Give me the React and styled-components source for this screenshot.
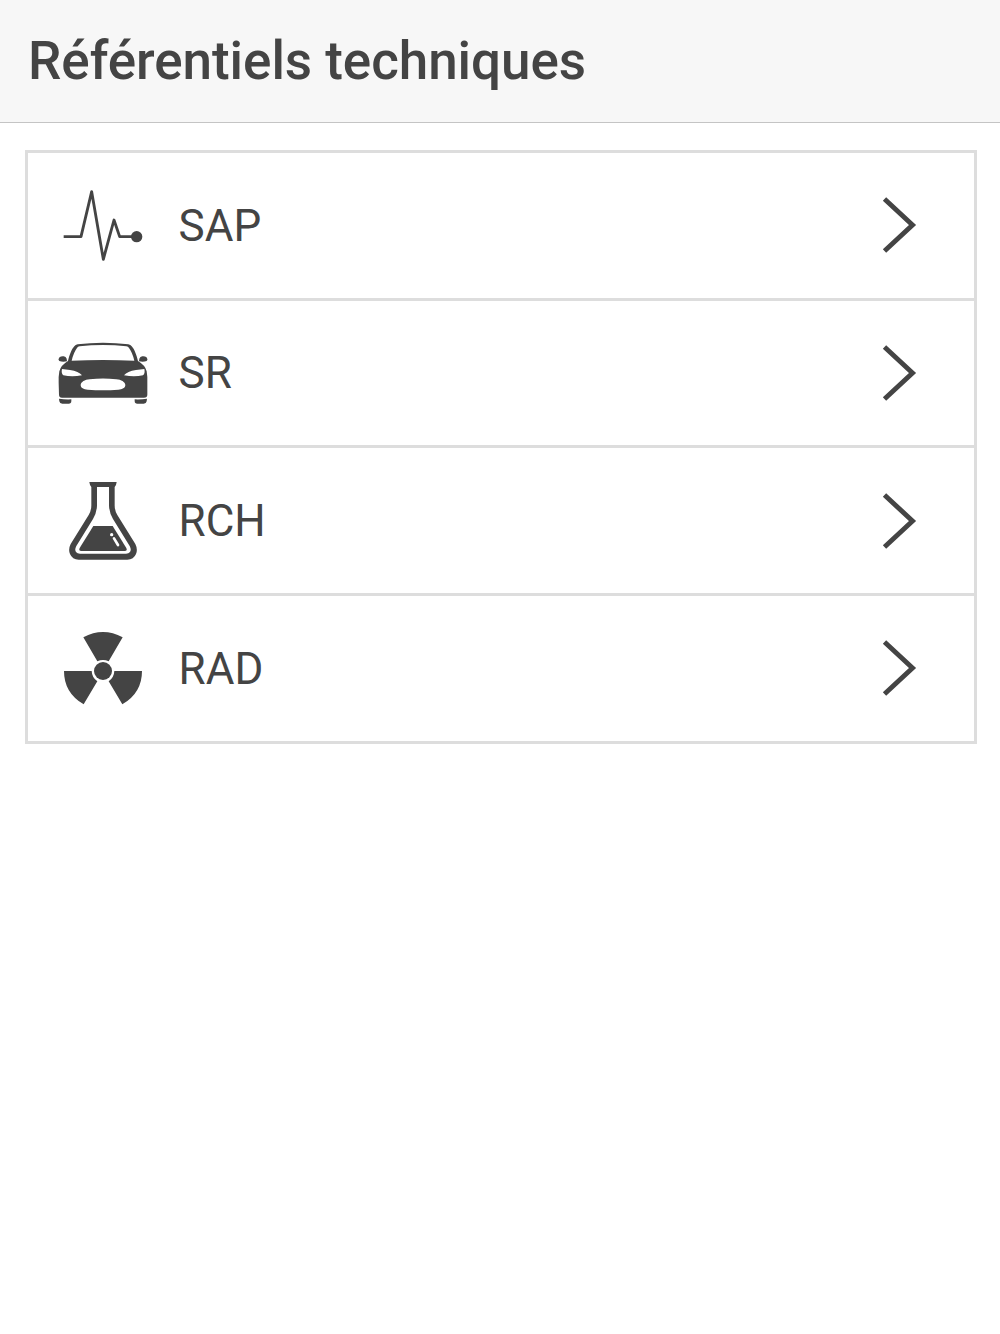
import React from 'react';
import styled, { createGlobalStyle } from 'styled-components';

const PulseIcon = () => (
  <Icon viewBox="15 -9 288 288">
    <path
      d="M41 170H93L125 35L160 238L192 120L209 170H255"
      fill="none"
      stroke="currentColor"
      strokeWidth="8.5"
      strokeLinejoin="round"
    />
    <circle cx="260" cy="170" r="17" />
  </Icon>
);

const CarIcon = () => (
  <Icon viewBox="15 -15 288 288">
    <path
      fillRule="evenodd"
      d="M54 93C58 76 65 57 73 49Q76 44 83 43Q120 38 159 38Q198 38 235 43Q242 44 245 49C253 57 260 76 264 93
        Q286 106 290 124Q293 140 292 160L292 194Q292 203 282 203H36Q27 203 27 194L26 160Q25 140 28 124Q32 106 54 93Z
        M65 92Q110 90 159 90Q208 90 253 92Q247 67 237 54Q235 50 229 49Q195 45 159 45Q123 45 89 49Q83 50 81 54Q71 67 65 92Z
        M36 117Q33 130 40 136Q66 142 96 136Q86 124 60 120Z
        M283 117Q286 130 279 136Q253 142 222 136Q232 124 258 120Z
        M119 148Q159 143 199 148C214 149 225 156 226 165C226 174 217 178 205 179Q159 182 113 179C101 178 92 174 92 165C93 156 104 149 119 148Z"
    />
    <path d="M26 88C26 81 33 78 41 79Q48 80 50 86L51 94Q38 97 28 93Q26 92 26 88Z" />
    <path d="M292 88C292 81 285 78 277 79Q270 80 268 86L267 94Q280 97 290 93Q292 92 292 88Z" />
    <path d="M27 206Q45 209 64 208V213Q64 221 56 221H37Q29 221 28 214Z" />
    <path d="M291 206Q273 209 254 208V213Q254 221 262 221H281Q289 221 290 214Z" />
  </Icon>
);

const FlaskIcon = () => (
  <Icon viewBox="-15 9 288 288">
    <path
      fillRule="evenodd"
      d="M88 36H170Q169 46 164 51V106Q164 122 172 135L226 222Q234 238 228 252Q221 269 202 269H56Q37 269 30 252Q24 238 32 222L86 135Q94 122 94 106V51Q89 46 88 36Z
        M111 51V107Q110 129 99 147L49 228Q43 239 48 246Q52 251 60 251H198Q206 251 210 246Q215 239 209 228L159 147Q148 129 147 107V51Z"
    />
    <path d="M100 168H158L199 234Q203 243 194 243H64Q55 243 59 234Z" />
    <circle cx="155" cy="194" r="5" fill="#fff" />
    <path d="M162 205L174 225" stroke="#fff" strokeWidth="8" strokeLinecap="round" />
  </Icon>
);

const RadiationIcon = () => (
  <Icon viewBox="0 0 288 288">
    <path d="M85 52Q144 20 203 52L161 124Q144 116 127 124Z" />
    <path d="M27 153H110Q111 173 127 184L86 253Q27 219 27 153Z" />
    <path d="M261 153H178Q177 173 161 184L202 253Q261 219 261 153Z" />
    <circle cx="144" cy="153" r="27" />
  </Icon>
);

const items = [
  { label: 'SAP', icon: PulseIcon },
  { label: 'SR', icon: CarIcon },
  { label: 'RCH', icon: FlaskIcon },
  { label: 'RAD', icon: RadiationIcon },
];

const App = () => (
  <Page>
    <GlobalStyle />
    <Header>
      <Title>Référentiels techniques</Title>
    </Header>
    <List>
      {items.map(({ label, icon: ItemIcon }) =>
        <Item key={label}>
          <ItemIcon />
          <Label>{label}</Label>
          <Chevron viewBox="0 0 36 60">
            <path d="M2.5 4L30.5 30L2.5 56" />
          </Chevron>
        </Item>
      )}
    </List>
  </Page>
);

const GlobalStyle = createGlobalStyle`
  body {
    margin: 0;
    background-color: #fff;
  }

  * {
    box-sizing: border-box;
  }
`;

const Page = styled.div`
  min-height: 100vh;
  color: #444;
  font-family: Roboto, sans-serif;
`;

const Header = styled.header`
  display: flex;
  align-items: center;
  height: 123px;
  padding: 0 28px;
  background-color: #f7f7f7;
  border-bottom: 1px solid #c4c4c4;
`;

const Title = styled.h1`
  margin: 0;
  font-size: 53px;
  font-weight: 500;
  line-height: 64px;
  letter-spacing: -0.05px;
`;

const List = styled.ul`
  margin: 27px 23px 0 25px;
  padding: 0;
  list-style: none;
  border: 3px solid #ddd;
`;

const Item = styled.li`
  display: flex;
  align-items: center;
  height: 147.67px;
  padding: 0 56px 0 27px;
  border-bottom: 3px solid #ddd;

  &:last-child {
    height: 144.67px;
    border-bottom: none;
  }
`;

const Icon = styled.svg`
  flex: none;
  width: 96px;
  height: 96px;
  fill: currentColor;
`;

const Label = styled.span`
  flex: 1;
  margin-left: 27.6px;
  padding-top: 1px;
  font-size: 44px;
  line-height: 52px;
`;

const Chevron = styled.svg`
  flex: none;
  width: 36px;
  height: 60px;
  fill: none;
  stroke: currentColor;
  stroke-width: 4.9px;
`;

export default App;
